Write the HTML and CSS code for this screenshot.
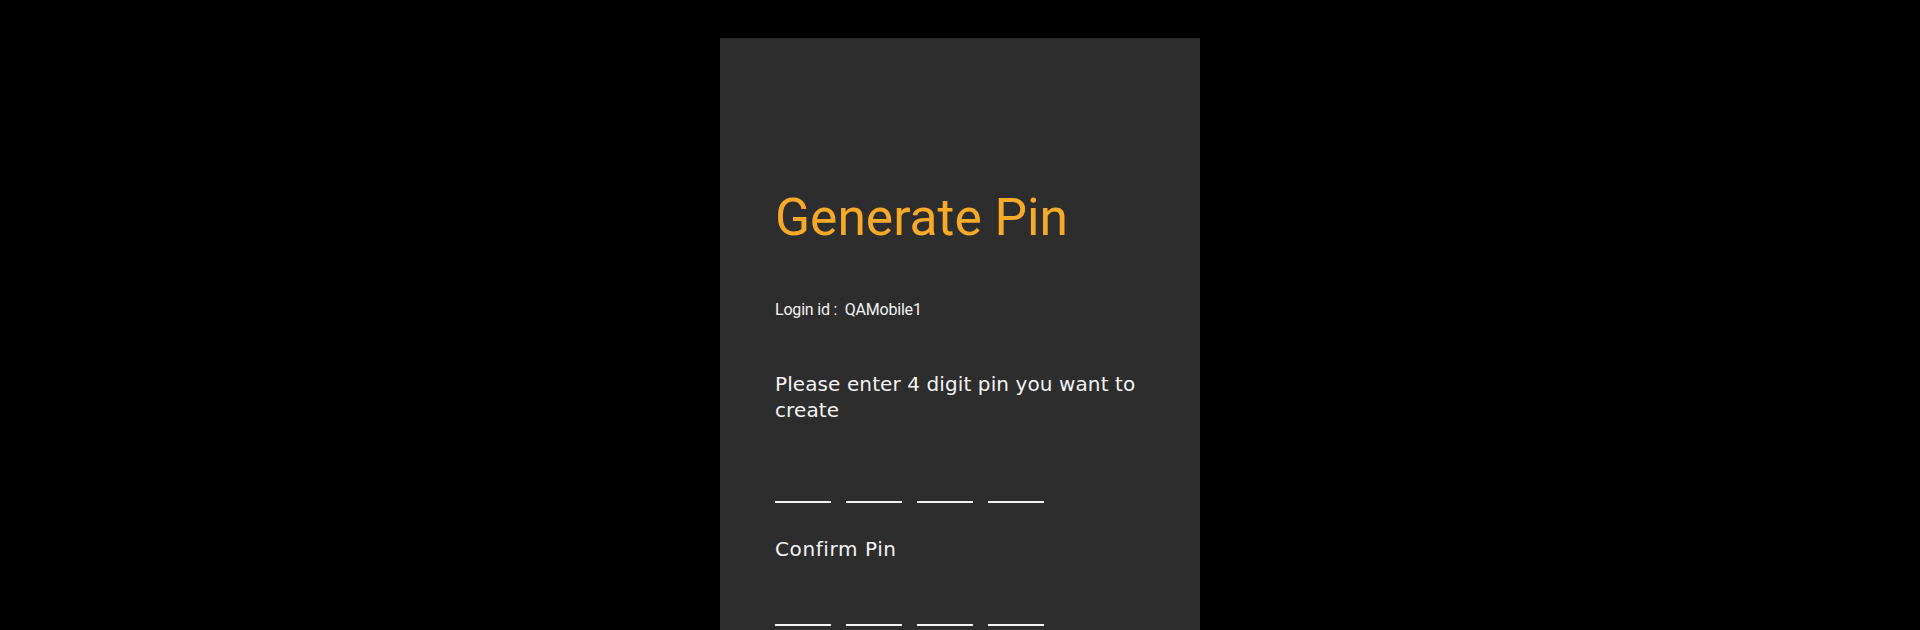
FILE: index.html
```html
<!DOCTYPE html>
<html lang="en">
<head>
<meta charset="utf-8">
<title>Generate Pin</title>
<link rel="stylesheet" href="styles.css">
</head>
<body>
<main class="screen">
  <h1 class="title">Generate Pin</h1>
  <p class="login">Login id :&nbsp; QAMobile1</p>
  <p class="prompt">Please enter 4 digit pin you want to create</p>
  <div class="pin-row pin-row--first">
    <span class="pin-box"></span>
    <span class="pin-box"></span>
    <span class="pin-box"></span>
    <span class="pin-box"></span>
  </div>
  <p class="prompt prompt--confirm">Confirm Pin</p>
  <div class="pin-row pin-row--second">
    <span class="pin-box"></span>
    <span class="pin-box"></span>
    <span class="pin-box"></span>
    <span class="pin-box"></span>
  </div>
</main>
</body>
</html>
```

FILE: styles.css
```css
html, body {
  margin: 0;
  padding: 0;
  background: #000;
  height: 630px;
  overflow: hidden;
}

.screen {
  box-sizing: border-box;
  width: 480px;
  height: 592px;
  overflow: hidden;
  margin: 38px auto 0;
  background: #2d2d2d;
  padding: 154px 56px 0 55px;
  display: flex;
  flex-direction: column;
  align-items: flex-start;
}

.title {
  margin: 0;
  font-family: Roboto, "Liberation Sans", sans-serif;
  font-weight: 400;
  font-size: 51.5px;
  line-height: 51px;
  color: #f7a928;
}

.login {
  margin: 57px 0 0;
  font-family: Roboto, "Liberation Sans", sans-serif;
  font-size: 16px;
  line-height: 20px;
  letter-spacing: -0.2px;
  color: #f2f2f2;
}

.prompt {
  margin: 51px 0 0;
  font-family: "DejaVu Sans", "Noto Sans", sans-serif;
  font-size: 20px;
  line-height: 26px;
  letter-spacing: 0.1px;
  color: #f4f4f4;
}

.prompt--confirm {
  margin-top: 33px;
  letter-spacing: 0.6px;
}

.pin-row {
  display: flex;
  flex-shrink: 0;
  gap: 15px;
}

.pin-row--first {
  margin-top: 38px;
}

.pin-row--second {
  margin-top: 22px;
}

.pin-box {
  display: block;
  width: 56px;
  height: 40px;
  border-bottom: 2px solid #f4f4f4;
}
```
